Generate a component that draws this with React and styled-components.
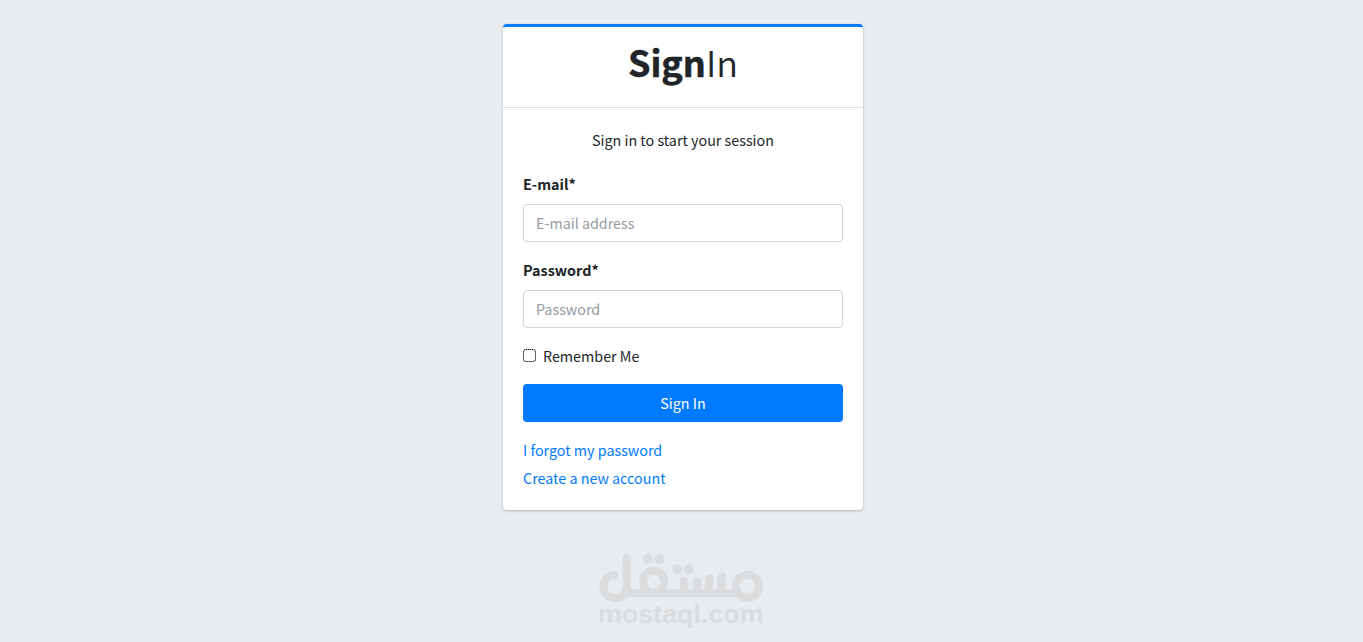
import React, { useState } from "react";
import styled, { createGlobalStyle } from "styled-components";

const App = () => {
    const [remember, setRemember] = useState(false);

    return (
        <>
            <GlobalStyle />
            <Page>
                <Card>
                    <CardHeader>
                        <Title>
                            <b>Sign</b>In
                        </Title>
                    </CardHeader>
                    <CardBody onSubmit={(e) => e.preventDefault()}>
                        <Intro>Sign in to start your session</Intro>
                        <Field>
                            <Label htmlFor="email">E-mail*</Label>
                            <Input id="email" type="email" placeholder="E-mail address" />
                        </Field>
                        <Field>
                            <Label htmlFor="password">Password*</Label>
                            <Input id="password" type="password" placeholder="Password" />
                        </Field>
                        <Remember>
                            <Checkbox
                                type="checkbox"
                                checked={remember}
                                onChange={() => setRemember(!remember)}
                            />
                            <span>Remember Me</span>
                        </Remember>
                        <Button type="submit">Sign In</Button>
                        <Links>
                            <Link href="#">I forgot my password</Link>
                            <Link href="#">Create a new account</Link>
                        </Links>
                    </CardBody>
                </Card>
                <Watermark viewBox="0 0 546 270">
                    <g fill="none" stroke="currentColor" strokeWidth="24" strokeLinecap="round">
                        <path d="M72 90 A35 35 0 1 0 110 124 V39" />
                        <path d="M72 158 Q96 158 108 144 H436" />
                        <circle cx="191" cy="110" r="32" />
                        <path d="M281 108 V140 M321 108 L319 140 M359 101 L355 140 M396 94 L390 140" />
                        <circle cx="472" cy="124" r="35" />
                    </g>
                    <g fill="currentColor">
                        <circle cx="174" cy="42" r="15" />
                        <circle cx="209" cy="42" r="15" />
                        <circle cx="261" cy="72" r="15" />
                        <circle cx="296" cy="72" r="15" />
                        <text x="24" y="234" textLength="497" lengthAdjust="spacingAndGlyphs">
                            mostaql.com
                        </text>
                    </g>
                </Watermark>
            </Page>
        </>
    );
};

export default App;

const GlobalStyle = createGlobalStyle`
  *, *::before, *::after {
    box-sizing: border-box;
  }

  body {
    margin: 0;
    background: #e9ecef;
    color: #212529;
    font-family: "Source Sans Pro", "Noto Sans CJK SC", sans-serif;
    font-size: 14.32px;
    line-height: 24px;
  }
`;

const Page = styled.main`
  display: flex;
  flex-direction: column;
  align-items: center;
  height: 642px;
  padding: 24px 0 0 3px;
  overflow: hidden;
`;

const Card = styled.section`
  width: 360px;
  background: #fff;
  border-top: 3px solid #007bff;
  border-radius: 4px;
  box-shadow: 0 0 1px rgba(0, 0, 0, 0.125), 0 1px 3px rgba(0, 0, 0, 0.2);
`;

const CardHeader = styled.header`
  height: 81px;
  padding-top: 12px;
  border-bottom: 1px solid rgba(0, 0, 0, 0.125);
  text-align: center;
`;

const Title = styled.h1`
  margin: 0;
  font-size: 36px;
  font-weight: 350;
  line-height: 44px;

  b {
    font-weight: 700;
    -webkit-text-stroke: 0.5px currentColor;
  }
`;

const CardBody = styled.form`
  padding: 20px;
`;

const Intro = styled.p`
  margin: 0 0 20px;
  text-align: center;
`;

const Field = styled.div`
  margin-bottom: 16px;
`;

const Label = styled.label`
  display: block;
  margin-bottom: 8px;
  font-size: 14.4px;
  font-weight: 700;
`;

const Input = styled.input`
  display: block;
  width: 100%;
  height: 38px;
  padding: 5px 12px 7px;
  border: 1px solid #ced4da;
  border-radius: 4px;
  background: #fff;
  color: #495057;
  font: inherit;
  outline: none;

  &::placeholder {
    color: #939ba2;
    opacity: 1;
  }

  &:focus {
    border-color: #80bdff;
  }
`;

const Remember = styled.label`
  display: flex;
  align-items: center;
  gap: 7px;
  height: 24px;
  margin-bottom: 16px;
`;

const Checkbox = styled.input`
  appearance: none;
  width: 13px;
  height: 13px;
  margin: 0 0 1px;
  border: 1px dotted #35181c;
  border-radius: 3px;
  background: linear-gradient(#fff, #fff) padding-box, #a4a6ab border-box;

  &:checked {
    background: #007bff;
  }
`;

const Button = styled.button`
  display: block;
  width: 100%;
  height: 38px;
  padding: 0;
  border: 0;
  border-radius: 4px;
  background: #007bff;
  color: #fff;
  font: inherit;
  cursor: pointer;
`;

const Links = styled.nav`
  display: flex;
  flex-direction: column;
  align-items: flex-start;
  gap: 4px;
  margin-top: 16px;
`;

const Link = styled.a`
  color: #007bff;
  text-decoration: none;
`;

const Watermark = styled.svg`
  flex-shrink: 0;
  width: 182px;
  height: 90px;
  margin: 35px 4px 0 0;
  color: #dadcde;

  text {
    font-family: "Liberation Sans", Arial, sans-serif;
    font-size: 80px;
    font-weight: 700;
  }
`;
